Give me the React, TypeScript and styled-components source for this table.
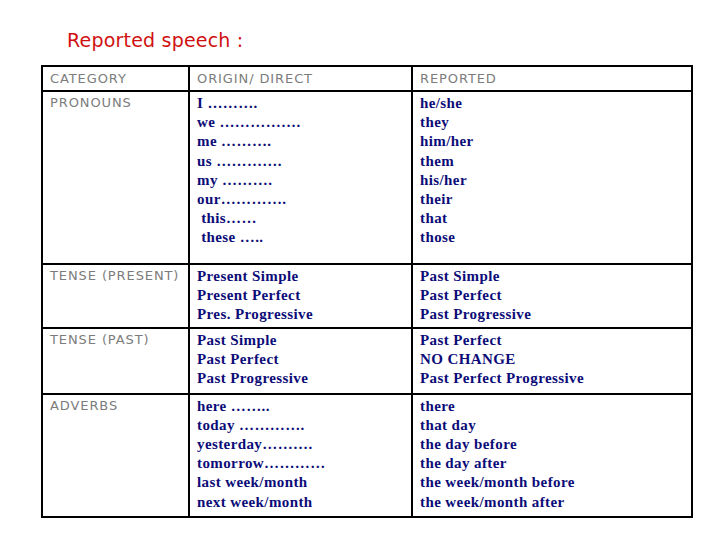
import React from "react";
import styled, { createGlobalStyle } from "styled-components";

const GlobalStyle = createGlobalStyle`
  html, body {
    margin: 0;
    padding: 0;
    background: #ffffff;
  }
`;

type Row = {
  category: string;
  origin: string[];
  reported: string[];
  height: number;
};

const rows: Row[] = [
  {
    category: "PRONOUNS",
    origin: [
      "I ……….",
      "we …………….",
      "me ……….",
      "us ………….",
      "my ……….",
      "our………….",
      "\u00a0this……",
      "\u00a0these …..",
    ],
    reported: ["he/she", "they", "him/her", "them", "his/her", "their", "that", "those"],
    height: 173,
  },
  {
    category: "TENSE (PRESENT)",
    origin: ["Present Simple", "Present Perfect", "Pres. Progressive"],
    reported: ["Past Simple", "Past Perfect", "Past Progressive"],
    height: 63,
  },
  {
    category: "TENSE (PAST)",
    origin: ["Past Simple", "Past Perfect", "Past Progressive"],
    reported: ["Past Perfect", "NO CHANGE", "Past Perfect Progressive"],
    height: 66,
  },
  {
    category: "ADVERBS",
    origin: [
      "here ……..",
      "today ………….",
      "yesterday……….",
      "tomorrow…………",
      "last week/month",
      "next week/month",
    ],
    reported: [
      "there",
      "that day",
      "the day before",
      "the day after",
      "the week/month before",
      "the week/month after",
    ],
    height: 123,
  },
];

const App: React.FC = () => {
  return (
    <Page>
      <GlobalStyle />
      <Title>Reported speech :</Title>
      <Table>
        <colgroup>
          <col style={{ width: 147 }} />
          <col style={{ width: 223 }} />
          <col style={{ width: 280 }} />
        </colgroup>
        <thead>
          <HeadRow>
            <HeadCell>CATEGORY</HeadCell>
            <HeadCell>ORIGIN/ DIRECT</HeadCell>
            <HeadCell>REPORTED</HeadCell>
          </HeadRow>
        </thead>
        <tbody>
          {rows.map((row) => (
            <BodyRow key={row.category} $height={row.height}>
              <LabelCell>{row.category}</LabelCell>
              <TextCell>
                {row.origin.map((line, i) => (
                  <Line key={i}>{line}</Line>
                ))}
              </TextCell>
              <TextCell>
                {row.reported.map((line, i) => (
                  <Line key={i}>{line}</Line>
                ))}
              </TextCell>
            </BodyRow>
          ))}
        </tbody>
      </Table>
    </Page>
  );
};

export default App;

const Page = styled.div`
  width: 720px;
  height: 540px;
  padding: 27px 0 0 41px;
  box-sizing: border-box;
`;

const Title = styled.h1`
  margin: 0 0 12px 26px;
  font-family: "DejaVu Sans", "Liberation Sans", sans-serif;
  font-weight: normal;
  font-size: 19px;
  line-height: 26px;
  letter-spacing: 0.2px;
  color: #d01010;
`;

const Table = styled.table`
  width: 650px;
  border-collapse: collapse;
  table-layout: fixed;
  border: 2px solid #000;
`;

const HeadRow = styled.tr`
  height: 25px;
`;

const HeadCell = styled.th`
  border: 2px solid #000;
  padding: 0 7px;
  text-align: left;
  vertical-align: middle;
  font-family: "DejaVu Sans", "Liberation Sans", sans-serif;
  font-weight: normal;
  font-size: 13px;
  letter-spacing: 0.9px;
  color: #7c7c7c;
`;

const BodyRow = styled.tr<{ $height: number }>`
  height: ${(p) => p.$height}px;
`;

const LabelCell = styled.td`
  border: 2px solid #000;
  padding: 2px 7px;
  vertical-align: top;
  font-family: "DejaVu Sans", "Liberation Sans", sans-serif;
  font-size: 13px;
  letter-spacing: 0.9px;
  line-height: 18px;
  color: #7c7c7c;
`;

const TextCell = styled.td`
  border: 2px solid #000;
  padding: 2px 7px;
  vertical-align: top;
  font-family: "Liberation Serif", "Times New Roman", serif;
  font-weight: bold;
  font-size: 15px;
  letter-spacing: 0.4px;
  line-height: 19.2px;
  color: #0c0c78;
`;

const Line = styled.div`
  white-space: pre;
`;
